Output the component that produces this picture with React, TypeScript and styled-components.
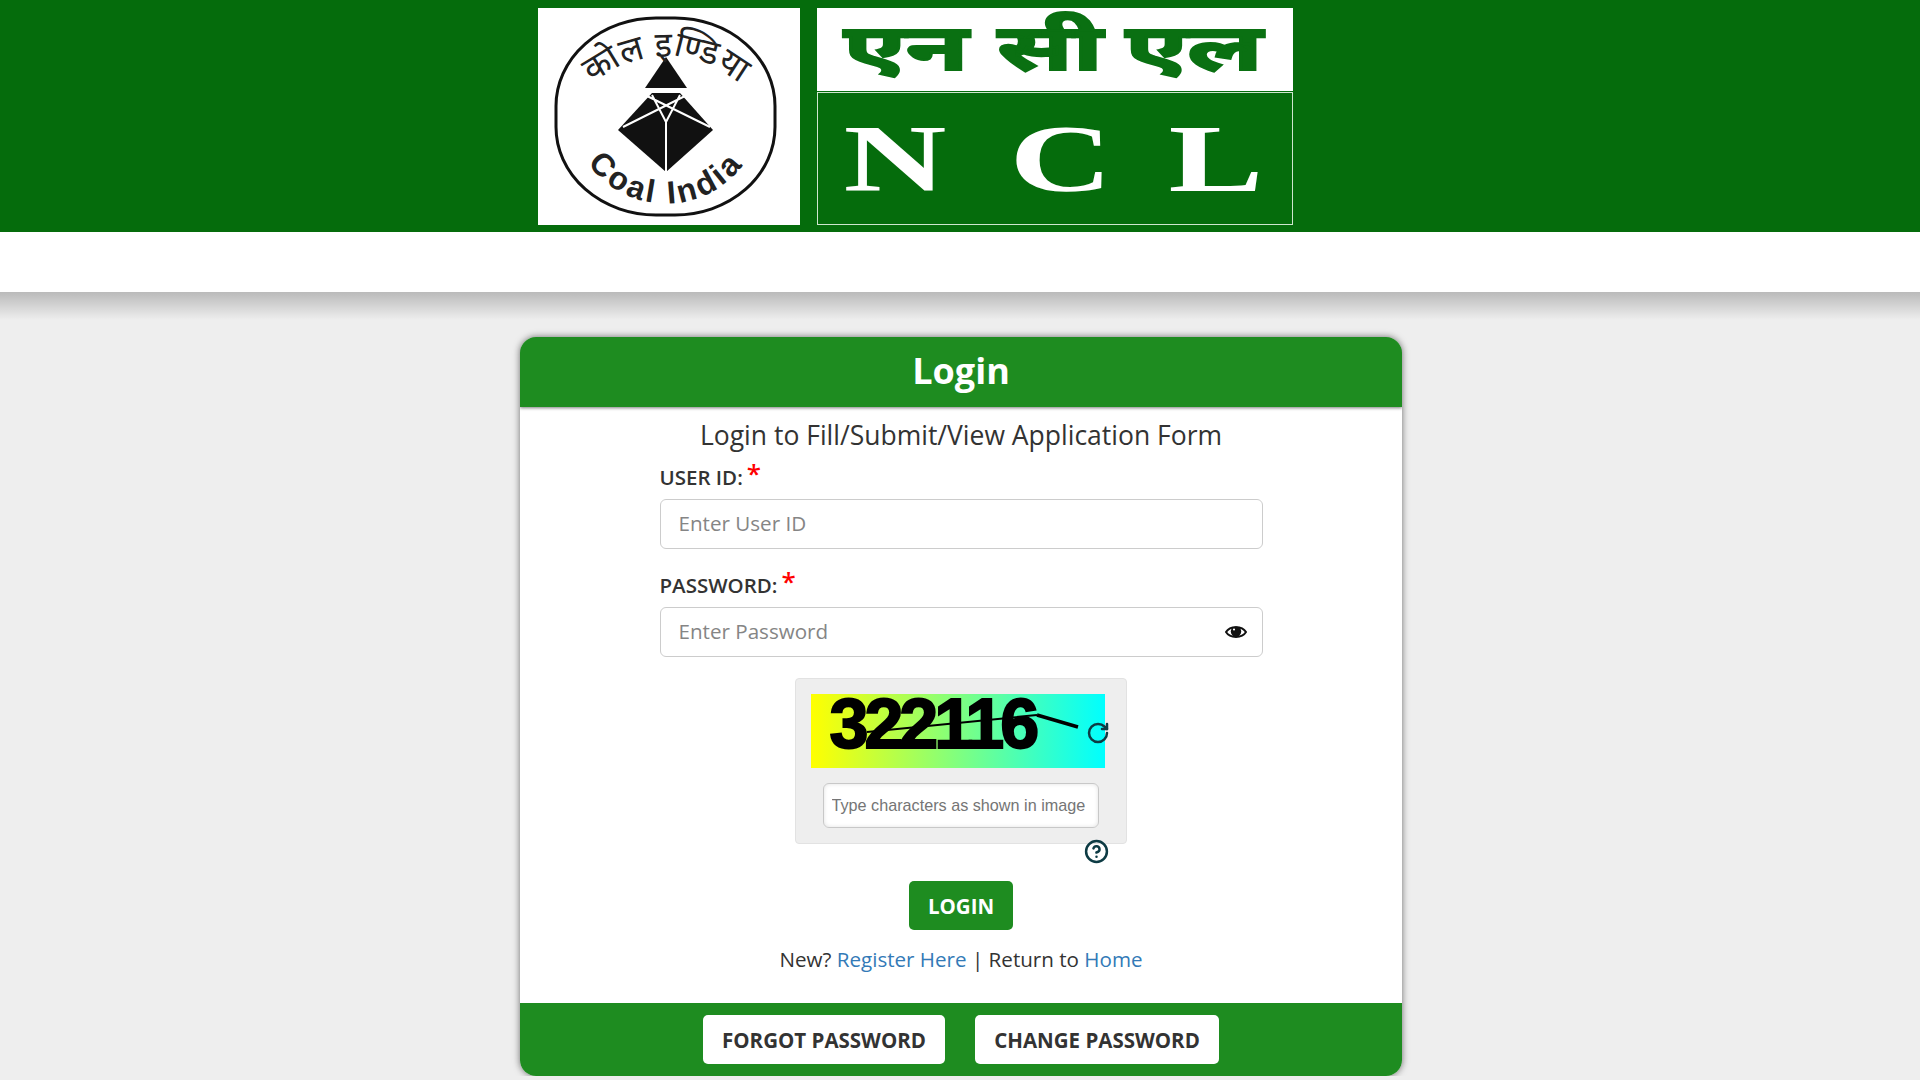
import { createGlobalStyle, styled } from 'styled-components';
import { CircleHelp, RotateCw } from 'lucide-react';

const GlobalStyle = createGlobalStyle`
  html, body {
    margin: 0;
    padding: 0;
    background: #eeeeee;
    font-family: "Open Sans", "Noto Sans", sans-serif;
    color: #333333;
  }
  * {
    box-sizing: border-box;
  }
`;

const Banner = styled.header`
  height: 232px;
  background: #056c0c;
  padding: 8px 89px 0 0;
  display: flex;
  justify-content: center;
  gap: 17px;
`;

const SealBox = styled.div`
  width: 262px;
  height: 217px;
  background: #ffffff;
`;

const NameColumn = styled.div`
  width: 476px;
  height: 217px;
  display: flex;
  flex-direction: column;
  gap: 1px;
`;

const HindiName = styled.div`
  height: 83px;
  padding-left: 29px;
  background: #ffffff;
  color: #0a7012;
  font-family: "Noto Sans", "DejaVu Sans", sans-serif;
  font-weight: 700;
  font-size: 64px;
  line-height: 76px;
  -webkit-text-stroke: 2px #0a7012;
  display: flex;
  gap: 24px;
`;

const EnglishName = styled.div`
  flex: 1;
  border: 1px solid #cfe6cf;
  color: #ffffff;
  font-family: "Liberation Serif", serif;
  font-weight: 700;
  font-size: 95px;
  display: flex;
  gap: 55px;
  align-items: center;
  padding-left: 27px;
`;

// the logo lettering is wider than any installed face, so it gets stretched
const Stretched = styled.span<{ $width: number; $scale: number; $nudge?: number }>`
  display: inline-block;
  width: ${p => p.$width}px;
  margin-left: ${p => p.$nudge ?? 0}px;
  text-align: center;
  transform: scaleX(${p => p.$scale});
`;

const NavStrip = styled.nav`
  position: relative;
  height: 60px;
  background: #ffffff;
  &::after {
    content: '';
    position: absolute;
    left: 0;
    right: 0;
    top: 100%;
    height: 28px;
    background: linear-gradient(rgba(0, 0, 0, 0.22), rgba(0, 0, 0, 0));
  }
`;

const Card = styled.main`
  width: 882px;
  margin: 45px 0 0 520px;
  background: #ffffff;
  border-radius: 16px;
  box-shadow: 0 0 7px rgba(0, 0, 0, 0.55);
  overflow: hidden;
`;

const CardHead = styled.div`
  height: 70px;
  padding-bottom: 4px;
  background: #1e8c20;
  color: #ffffff;
  font-size: 36px;
  font-weight: 700;
  display: flex;
  align-items: center;
  justify-content: center;
  box-shadow: 0 1px 3px rgba(0, 0, 0, 0.5);
`;

const Subtitle = styled.h2`
  margin: 10px 0 0;
  font-size: 26.5px;
  line-height: 36px;
  font-weight: 400;
  text-align: center;
`;

const Form = styled.form`
  width: 603px;
  margin: 0 auto;
  display: flex;
  flex-direction: column;
`;

const Label = styled.label<{ $top: number }>`
  margin-top: ${p => p.$top}px;
  height: 38px;
  font-size: 20.5px;
  line-height: 32px;
  font-weight: 600;
  display: flex;
  gap: 4px;
`;

const Star = styled.span`
  color: #ff0000;
  font-size: 26px;
  line-height: 24px;
`;

const FieldWrap = styled.div`
  position: relative;
  height: 50px;
`;

const TextInput = styled.input`
  width: 100%;
  height: 100%;
  border: 1px solid #cccccc;
  border-radius: 6px;
  padding: 0 18px 2px;
  font-family: inherit;
  font-size: 20.6px;
  outline: none;
  &::placeholder {
    color: #858585;
  }
`;

const EyeButton = styled.span`
  position: absolute;
  right: 16px;
  top: 17px;
  line-height: 0;
`;

const CaptchaBox = styled.div`
  width: 332px;
  height: 166px;
  margin: 21px 0 0 135px;
  background: #eeeeee;
  border: 1px solid #e2e2e2;
  border-radius: 4px;
  padding: 15px;
  display: flex;
  flex-direction: column;
  align-items: center;
`;

const CaptchaImage = styled.div`
  position: relative;
  align-self: flex-start;
  width: 294px;
  height: 74px;
  flex: none;
  background: linear-gradient(to right, #ffff00, #00ffff);
  color: #000000;
  font-family: "Liberation Sans", sans-serif;
  font-weight: 700;
  font-size: 70px;
  line-height: 60px;
  letter-spacing: -4px;
  -webkit-text-stroke: 2px #000000;
  padding-left: 19px;
  white-space: nowrap;
`;

const CaptchaScratch = styled.svg`
  position: absolute;
  left: 0;
  top: 0;
`;

const RefreshIcon = styled.span`
  position: absolute;
  left: 275px;
  top: 27px;
  line-height: 0;
  color: #0d3b44;
`;

const CaptchaInput = styled.input`
  width: 276px;
  height: 45px;
  margin-top: 15px;
  flex: none;
  border: 1px solid #c8c8c8;
  border-radius: 6px;
  padding: 0 8px;
  font-family: "Liberation Sans", sans-serif;
  font-size: 16.2px;
  outline: none;
  box-shadow: inset 0 0 4px rgba(0, 0, 0, 0.12);
  &::placeholder {
    color: #757575;
  }
`;

const HelpRow = styled.div`
  height: 42px;
  margin-top: -5px;
  padding-left: 424px;
  line-height: 0;
  color: #0d3b44;
`;

const LoginRow = styled.div`
  display: flex;
  justify-content: center;
`;

const LoginButton = styled.button`
  width: 104px;
  height: 49px;
  border: none;
  border-radius: 5px;
  background: #1e8c20;
  color: #ffffff;
  font-family: inherit;
  font-size: 20.5px;
  font-weight: 700;
`;

const LinksLine = styled.p`
  margin: 13px 0 0;
  height: 59px;
  font-size: 20.6px;
  line-height: 32px;
  text-align: center;
`;

const Link = styled.a`
  color: #337ab7;
  text-decoration: none;
`;

const CardFoot = styled.div`
  height: 73px;
  background: #1e8c20;
  display: flex;
  justify-content: center;
  gap: 30px;
  padding-top: 12px;
  margin-top: 1px;
`;

const FootButton = styled.button<{ $width: number }>`
  height: 49px;
  width: ${p => p.$width}px;
  border: none;
  border-radius: 5px;
  background: #ffffff;
  color: #333333;
  font-family: inherit;
  font-size: 20.5px;
  font-weight: 700;
`;

const Seal = () => (
  <svg width="262" height="217" viewBox="0 0 262 217">
    <defs>
      <path id="seal-top" d="M 45 85 A 113 113 0 0 1 211 85" />
      <path id="seal-bottom" d="M 36 127 A 96 96 0 0 0 220 127" />
    </defs>
    <rect x="18" y="10" width="219" height="197" rx="100" ry="88" fill="none" stroke="#111111" strokeWidth="3" />
    <path d="M128 49 L149 80 L107 80 Z" fill="#111111" />
    <path d="M114 85 L142 85 L175 122 L128 164 L80 122 Z" fill="#111111" />
    <path
      d="M85 119 L149 87 M172 119 L107 87 M128 114 L114 87 M128 114 L142 87 M128 114 L128 164"
      stroke="#ffffff"
      strokeWidth="2"
      fill="none"
    />
    <text fontFamily='"Noto Sans", "DejaVu Sans", sans-serif' fontSize="35" fill="#222222">
      <textPath href="#seal-top" startOffset="50%" textAnchor="middle">
        कोल इण्डिया
      </textPath>
    </text>
    <text fontFamily='"Liberation Sans", sans-serif' fontWeight="700" fontSize="32" letterSpacing="3" fill="#222222">
      <textPath href="#seal-bottom" startOffset="50%" textAnchor="middle">
        Coal India
      </textPath>
    </text>
  </svg>
);

const EyeIcon = () => (
  <svg width="22" height="16" viewBox="0 0 22 16">
    <path d="M1 8 C5 1.5 17 1.5 21 8 C17 14.5 5 14.5 1 8 Z" fill="#ffffff" stroke="#111111" strokeWidth="2" />
    <circle cx="11" cy="7.5" r="5.2" fill="#111111" />
    <circle cx="9" cy="5.5" r="1.1" fill="#ffffff" />
  </svg>
);

function App() {
  return (
    <>
      <GlobalStyle />
      <Banner>
        <SealBox>
          <Seal />
        </SealBox>
        <NameColumn>
          <HindiName>
            <Stretched $width={120} $scale={1.6}>एन</Stretched>
            <Stretched $width={120} $scale={1.6}>सी</Stretched>
            <Stretched $width={120} $scale={1.6}>एल</Stretched>
          </HindiName>
          <EnglishName>
            <Stretched $width={100} $scale={1.5}>N</Stretched>
            <Stretched $width={100} $scale={1.5} $nudge={11}>C</Stretched>
            <Stretched $width={100} $scale={1.5}>L</Stretched>
          </EnglishName>
        </NameColumn>
      </Banner>
      <NavStrip />
      <Card>
        <CardHead>Login</CardHead>
        <Subtitle>Login to Fill/Submit/View Application Form</Subtitle>
        <Form>
          <Label $top={8}>
            USER ID: <Star>*</Star>
          </Label>
          <FieldWrap>
            <TextInput placeholder="Enter User ID" />
          </FieldWrap>
          <Label $top={20}>
            PASSWORD: <Star>*</Star>
          </Label>
          <FieldWrap>
            <TextInput placeholder="Enter Password" />
            <EyeButton>
              <EyeIcon />
            </EyeButton>
          </FieldWrap>
          <CaptchaBox>
            <CaptchaImage>
              322116
              <CaptchaScratch width="294" height="74" viewBox="0 0 294 74">
                <path d="M56 38 L226 21" stroke="#000000" strokeWidth="2" fill="none" />
                <path d="M226 21 L267 33" stroke="#000000" strokeWidth="3.5" fill="none" />
              </CaptchaScratch>
              <RefreshIcon>
                <RotateCw size={24} strokeWidth={2.5} />
              </RefreshIcon>
            </CaptchaImage>
            <CaptchaInput placeholder="Type characters as shown in image" />
          </CaptchaBox>
          <HelpRow>
            <CircleHelp size={25} strokeWidth={2.4} />
          </HelpRow>
          <LoginRow>
            <LoginButton type="button">LOGIN</LoginButton>
          </LoginRow>
          <LinksLine>
            New? <Link href="#">Register Here</Link> | Return to <Link href="#">Home</Link>
          </LinksLine>
        </Form>
        <CardFoot>
          <FootButton type="button" $width={242}>
            FORGOT PASSWORD
          </FootButton>
          <FootButton type="button" $width={244}>
            CHANGE PASSWORD
          </FootButton>
        </CardFoot>
      </Card>
    </>
  );
}

export default App;
